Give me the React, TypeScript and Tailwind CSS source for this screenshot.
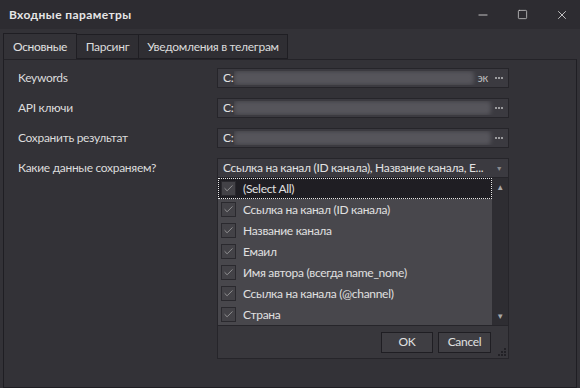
import { Check, Minus, Square, X } from "lucide-react";

const ITEMS = [
  "(Select All)",
  "Ссылка на канал (ID канала)",
  "Название канала",
  "Емаил",
  "Имя автора (всегда name_none)",
  "Ссылка на канала (@channel)",
  "Страна",
];

function Dots() {
  return (
    <span className="flex gap-[1px]">
      <span className="h-[2px] w-[2px] bg-[#9c9c9f]" />
      <span className="h-[2px] w-[2px] bg-[#9c9c9f]" />
      <span className="h-[2px] w-[2px] bg-[#9c9c9f]" />
    </span>
  );
}

function PathInput({ tail }: { tail?: string }) {
  return (
    <div className="flex h-[20px] w-[292px] items-center border border-[#26252a] bg-[#3b3a40] pl-[5px] pr-[5px]">
      <span className="text-[#e2e2e2]">C:</span>
      <div className="relative ml-[1px] h-[14px] flex-1 overflow-hidden">
        <div className="absolute inset-y-0 left-0 right-[4px] rounded-sm bg-[#56555b] blur-[2px]" />
      </div>
      {tail && <span className="mr-[7px] text-[11px] text-[#bdbdbd]">{tail}</span>}
      <Dots />
    </div>
  );
}

export default function App() {
  return (
    <div className="flex h-[388px] w-[580px] flex-col overflow-hidden bg-[#333237] font-['Lato',sans-serif] text-[12px] tracking-[-0.3px] text-[#dcdcdc]">
      <div className="flex h-[29px] items-center bg-[#2d2c31] pl-[9px]">
        <span className="font-bold tracking-[0.4px] text-[#e6e6e6]">Входные параметры</span>
        <div className="ml-auto flex items-center gap-[27px] pr-[11px] text-[#d6d6d6]">
          <Minus size={14} strokeWidth={1.5} />
          <Square size={11} strokeWidth={1.6} />
          <X size={14} strokeWidth={1.5} />
        </div>
      </div>

      <div className="flex flex-1 flex-col px-[3px] pt-[4px]">
        <div className="flex h-[26px] items-end">
          <div className="flex h-[26px] w-[74px] items-center justify-center border border-b-0 border-[#1f1e23] bg-[#333237] text-[#e0e0e0]">
            Основные
          </div>
          <div className="flex h-[25px] w-[62px] items-center justify-center border border-l-0 border-[#1f1e23] bg-[#2f2e33]">
            Парсинг
          </div>
          <div className="flex h-[25px] w-[149px] items-center justify-center border border-l-0 border-[#1f1e23] bg-[#2f2e33]">
            Уведомления в телеграм
          </div>
        </div>

        <div className="flex-1 border border-[#1f1e23] border-t-[#242328] bg-[#333237] pl-[14px] pt-[8px]">
          <div className="flex flex-col gap-[10px]">
            <div className="flex items-center">
              <span className="w-[199px]">Keywords</span>
              <PathInput tail="эк" />
            </div>
            <div className="flex items-center">
              <span className="w-[199px]">API ключи</span>
              <PathInput />
            </div>
            <div className="flex items-center">
              <span className="w-[199px]">Сохранить результат</span>
              <PathInput />
            </div>
            <div className="flex items-start">
              <span className="w-[199px] pt-[1px]">Какие данные сохраняем?</span>
              <div className="relative w-[292px]">
                <div className="flex h-[20px] items-center border border-[#26252a] bg-[#3b3a40] pl-[5px]">
                  <span className="flex-1 whitespace-nowrap text-[#e2e2e2]">
                    Ссылка на канал (ID канала), Название канала, Е...
                  </span>
                  <span className="flex w-[18px] justify-center text-[7px] text-[#8a8a8e]">▼</span>
                </div>
                <div className="absolute left-0 top-[20px] z-10 w-[292px] border border-t-0 border-[#26252a] bg-[#38373c]">
                  <div className="flex h-[147px]">
                    <div className="flex-1 bg-[#48474c]">
                      {ITEMS.map((it, i) => (
                        <div
                          key={it}
                          className={
                            i === 0
                              ? "flex h-[21px] items-center border border-dotted border-[#e8e8e8] bg-[#1f1e23] pl-[2px]"
                              : "flex h-[21px] items-center pl-[3px]"
                          }
                        >
                          <span className="flex h-[15px] w-[15px] items-center justify-center border border-[#2a292e] bg-[#434247] text-[#c4c4c4]">
                            <Check size={11} strokeWidth={1.3} />
                          </span>
                          <span className="ml-[7px] text-[#e0e0e0]">{it}</span>
                        </div>
                      ))}
                    </div>
                    <div className="flex w-[16px] flex-col items-center justify-between bg-[#2e2d32] py-[5px] text-[8px] leading-none text-[#a8a8a8]">
                      <span>▲</span>
                      <span>▼</span>
                    </div>
                  </div>
                  <div className="relative flex h-[33px] items-center justify-end gap-[5px] border-t border-[#26252a] pr-[17px]">
                    <button className="h-[21px] w-[52px] border border-[#1f1e23] bg-[#3f3e43] text-[#e0e0e0]">OK</button>
                    <button className="h-[21px] w-[53px] border border-[#1f1e23] bg-[#3f3e43] text-[#e0e0e0]">Cancel</button>
                    <div className="absolute bottom-[2px] right-[2px] grid grid-cols-3 gap-[1px]">
                      <span />
                      <span />
                      <span className="h-[2px] w-[2px] bg-[#222126]" />
                      <span />
                      <span className="h-[2px] w-[2px] bg-[#222126]" />
                      <span className="h-[2px] w-[2px] bg-[#222126]" />
                      <span className="h-[2px] w-[2px] bg-[#222126]" />
                      <span className="h-[2px] w-[2px] bg-[#222126]" />
                      <span className="h-[2px] w-[2px] bg-[#222126]" />
                    </div>
                  </div>
                </div>
              </div>
            </div>
          </div>
        </div>
      </div>
    </div>
  );
}
